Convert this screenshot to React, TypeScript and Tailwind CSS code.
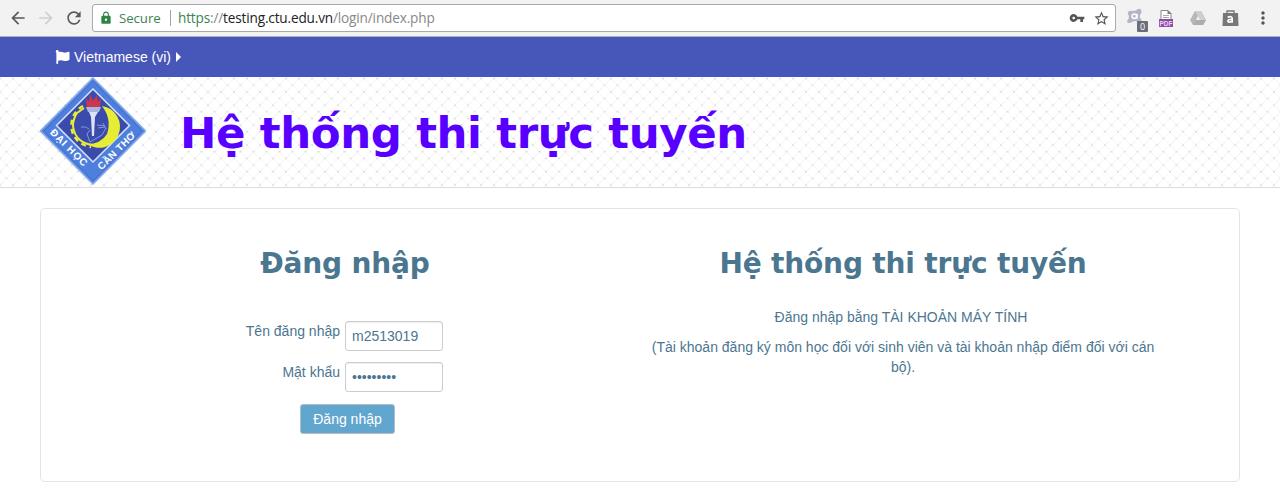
import React from "react";
import { FaFlag } from "react-icons/fa";
import { MdArrowBack, MdArrowForward, MdRefresh, MdLock, MdVpnKey, MdStarBorder, MdMoreVert } from "react-icons/md";

function BrowserBar() {
  return (
    <div className="flex h-[37px] items-center border-b border-[#b0b0b4] bg-[#f2f2f2] font-['Open_Sans','Noto_Sans',sans-serif]">
      <MdArrowBack className="ml-2 h-5 w-5 text-[#5a5a5a]" />
      <MdArrowForward className="ml-2 h-5 w-5 text-[#cfcfcf]" />
      <MdRefresh className="ml-2 h-5 w-5 text-[#5a5a5a]" />
      <div className="ml-2 flex h-7 w-[1024px] items-center rounded-[3px] border border-[#a9a9a9] bg-white text-sm leading-5">
        <MdLock className="ml-1.5 h-[14px] w-[14px] text-[#2d8544]" />
        <span className="ml-[6px] w-[42px] text-[13.3px] tracking-[-0.1px] whitespace-nowrap text-[#3c8350]">Secure</span>
        <span className="ml-[9px] h-4 w-px bg-[#a0a0a0]" />
        <span className="ml-[7px] text-[13.6px] tracking-[-0.16px] whitespace-nowrap text-[#888]">
          <span className="text-[#3c8350]">https</span>://<span className="text-[#222]">testing.ctu.edu.vn</span>/login/index.php
        </span>
        <MdVpnKey className="ml-auto h-4 w-4 text-[#555]" />
        <MdStarBorder className="mr-[5px] ml-[8px] h-[17px] w-[17px] text-[#555]" />
      </div>
      <AvastIcon />
      <PdfIcon />
      <DriveIcon />
      <BagIcon />
      <MdMoreVert className="ml-[14px] h-5 w-5 text-[#555]" />
    </div>
  );
}

function AvastIcon() {
  return (
    <svg className="ml-[9px] h-6 w-6 shrink-0 overflow-visible" viewBox="0 0 24 24">
      <path d="M3 6Q5 4 8 5Q11 5 13 3Q16 2 16.500 5Q17 7 15 9Q14 11 16 13Q18 16 15 17Q13 17 11 15Q8 15 5 17Q2 17.500 2 15Q4 13 4 10Q2 8 3 6Z" fill="#b4b4c4" />
      <circle cx="9.300" cy="10.300" r="2.200" fill="none" stroke="#fff" strokeWidth="1.500" />
      <path d="M12 7.800v5.200" stroke="#fff" strokeWidth="1.400" />
      <rect x="12" y="15" width="11" height="11" rx="1" fill="#6c6c7b" />
      <text x="17.5" y="24" textAnchor="middle" fontSize="9" fill="#fff" fontFamily="Open Sans, sans-serif">0</text>
    </svg>
  );
}

function PdfIcon() {
  return (
    <svg className="ml-[9px] h-5 w-4 shrink-0 overflow-visible" viewBox="0 0 16 20">
      <path d="M3 11V2.500h7l3 3V11" fill="#fff" stroke="#888" />
      <path d="M9.500 2v4h4z" fill="#777" />
      <path d="M5 7.500h6M5 9.500h6" fill="none" stroke="#aaa" />
      <rect x="1" y="11" width="14" height="8" fill="#8d4ca6" />
      <text x="8" y="17.500" textAnchor="middle" fontSize="6.5" fontWeight="bold" fill="#e9d5f1" fontFamily="Liberation Sans, sans-serif">PDF</text>
    </svg>
  );
}

function DriveIcon() {
  return (
    <svg className="ml-[15px] h-4 w-[18px] shrink-0" viewBox="0 0 18 16">
      <path d="M6 1h6l5 9-3 5H4l-3-5z" fill="#b7b7b7" />
      <path d="M6 1h6l5 9h-6z" fill="#cecece" />
      <path d="M4 15l3-5h10l-3 5z" fill="#adadad" />
      <path d="M9 6l2 4H7z" fill="#f2f2f2" />
    </svg>
  );
}

function BagIcon() {
  return (
    <svg className="ml-[15px] h-[18px] w-[17px] shrink-0" viewBox="0 0 17 18">
      <path d="M5 5V2h7v3" fill="none" stroke="#777" strokeWidth="1.3" />
      <path d="M1 4h15l.500 13H.500z" fill="#777" />
      <path d="M5.600 8.200Q10.200 6.500 10.200 9.500V13.700M10 10.400Q5.800 10.200 5.800 12Q6.200 14.200 10 12.200" fill="none" stroke="#fff" strokeWidth="1.6" />
    </svg>
  );
}

function Crest() {
  return (
    <svg className="ml-10 h-[108px] w-[106px] shrink-0" viewBox="0 0 106 108">
      <path d="M53 1 105.500 54 53 107 .500 54Z" fill="#4f7fdc" stroke="#86aaec" strokeWidth="1.6" />
      <path d="M53 4 102 54 53 104 4 54Z" fill="none" stroke="#3f6cc9" strokeWidth=".7" />
      <path d="M53 12 89.500 48.500 53 85 16.500 48.500Z" fill="#3b4bab" stroke="#d8e4fa" strokeWidth="1.5" />
      <path d="M62 29A21 21 0 1 1 47 67Q61 67 67 57Q72 42 62 29Z" fill="#e7ec35" />
      <path d="M44 31Q40 34 37 36Q33 42 33 49Q34 58 40 63Q45 67 52 68" fill="none" stroke="#e7ec35" strokeWidth="2" />
      <path d="M43 29Q39 31 36 35Q31 41 31.500 50Q32 58 38 64Q44 69 51 70" fill="none" stroke="#e7ec35" strokeWidth="2.500" strokeDasharray="5 4" />
      <path d="M49 35h9l-3 5-1 19h-2l-1-19z" fill="#dce5f6" />
      <path d="M46 30h15l-2 5H48z" fill="#a9b7df" />
      <path d="M47 30l-1-9 3 4 1-8 3 7 4-6 1 7 3-4-1 9z" fill="#d0364b" />
      <path d="M41 50q5-1 8 2M50 53l-3 4 3 8 12-7 4-7M57 48l8 1M58 51l7-1M63 46l3 6" fill="none" stroke="#8498da" strokeWidth="1" />
      <path id="crest-left" d="M9.500 56 L50 96.500" fill="none" />
      <path id="crest-right" d="M61.500 93.500 L101 54" fill="none" />
      <g fill="#fff" fontFamily="Liberation Sans, sans-serif" fontWeight="bold" fontSize="10">
        <text><textPath href="#crest-left" textLength="48">ĐẠI HỌC</textPath></text>
        <text><textPath href="#crest-right" textLength="49">CẦN THƠ</textPath></text>
      </g>
    </svg>
  );
}

function Lattice() {
  return (
    <svg className="absolute inset-0 h-full w-full" aria-hidden="true">
      <defs>
        <pattern id="lattice" x="-3" y="-2" width="13" height="13.31" patternUnits="userSpaceOnUse">
          <path d="M-3.500 10.160 9.500-3.150M-3.500 10.160 3 16.800M3 3.500 16 16.800M3 3.500 -3.500 -3.150M3 16.800 16 3.500M3 3.500 9.500 -3.150" fill="none" stroke="#f1f1f1" strokeWidth=".8" />
          <path d="M2 3.500h2M8.500 10.160h2" stroke="#d2d2d2" />
        </pattern>
      </defs>
      <rect width="100%" height="100%" fill="url(#lattice)" />
    </svg>
  );
}

function LoginForm() {
  return (
    <section className="w-[610px] pt-[34px]">
      <h2 className="-ml-0.5 text-center font-['DejaVu_Sans',sans-serif] text-[28px] leading-[42px] font-bold tracking-[-0.17px]">Đăng nhập</h2>
      <form className="mt-9">
        <div className="flex">
          <label className="w-[299px] text-right leading-5">Tên đăng nhập</label>
          <input readOnly value="m2513019" className="ml-[5px] h-[30px] w-[98px] rounded-[3px] border border-[#ccc] px-1.5 shadow-[inset_0_1px_1px_#eeeeee] outline-none" />
        </div>
        <div className="mt-[11px] flex">
          <label className="w-[299px] text-right leading-5">Mật khẩu</label>
          <input readOnly type="password" value="•••••••••" className="ml-[5px] h-[30px] w-[98px] rounded-[3px] border border-[#ccc] px-1.5 shadow-[inset_0_1px_1px_#eeeeee] outline-none" />
        </div>
        <button type="button" className="mt-3 ml-[259px] h-[30px] w-[95px] rounded-[3px] border border-[#b5bec5] bg-[#60a6cf] text-white">Đăng nhập</button>
      </form>
    </section>
  );
}

export default function App() {
  return (
    <main className="h-[493px] overflow-hidden bg-white font-['Liberation_Sans',Arial,sans-serif] text-sm text-[#4b7690]">
      <BrowserBar />
      <nav className="flex h-10 items-center bg-[#4756b9] pl-[55px] text-white">
        <FaFlag className="h-[14px] w-[15px]" />
        <span className="ml-1 whitespace-nowrap">Vietnamese (vi)</span>
        <svg className="ml-[5px] h-[10px] w-[5px]" viewBox="0 0 5 10"><path d="M0 0l5 5-5 5z" fill="currentColor" /></svg>
      </nav>
      <header className="relative h-[111px] border-b border-[#ddd]">
        <Lattice />
        <div className="relative flex">
          <Crest />
          <h1 className="ml-[34px] pt-[28px] font-['DejaVu_Sans',sans-serif] text-[43.5px] leading-[56px] font-bold tracking-[-0.42px] whitespace-nowrap text-[#5800ff]">Hệ thống thi trực tuyến</h1>
        </div>
      </header>
      <div className="mx-10 mt-5 flex h-[274px] rounded-[5px] border border-[#e3e3e3]">
        <LoginForm />
        <section className="w-[504px] pt-[34px] text-center">
          <h2 className="font-['DejaVu_Sans',sans-serif] text-[28px] leading-[42px] font-bold tracking-[-0.17px]">Hệ thống thi trực tuyến</h2>
          <p className="mt-[22px] -ml-1 leading-5">Đăng nhập bằng TÀI KHOẢN MÁY TÍNH</p>
          <p className="mt-2.5 leading-5">(Tài khoản đăng ký môn học đối với sinh viên và tài khoản nhập điểm đối với cán bộ).</p>
        </section>
      </div>
    </main>
  );
}
